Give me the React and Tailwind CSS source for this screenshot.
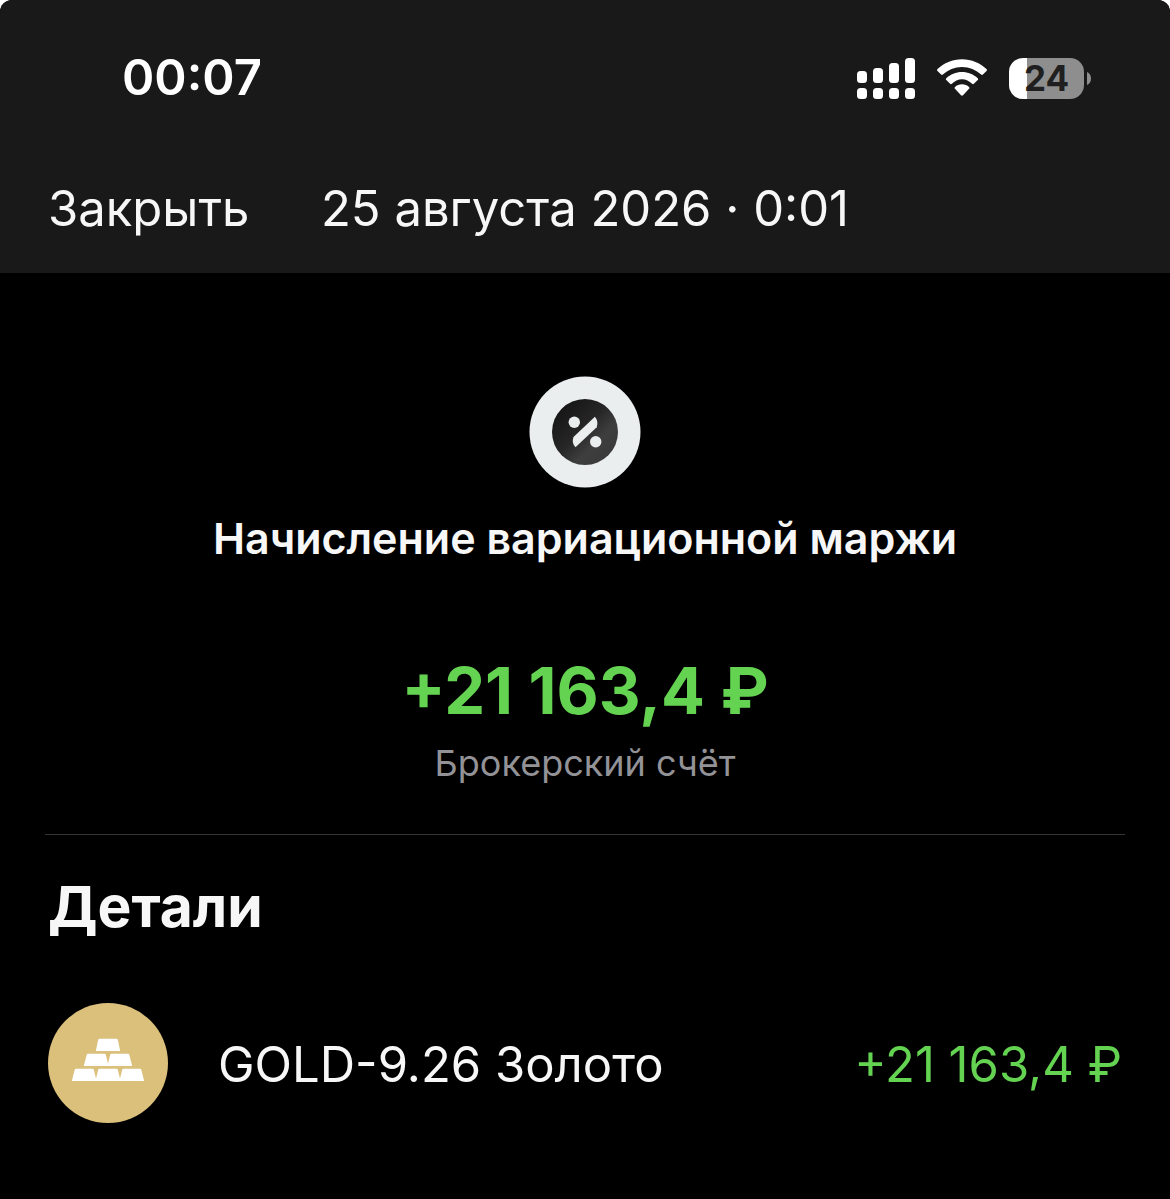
import React from "react";

const operation = {
  date: "25 августа 2026 · 0:01",
  title: "Начисление вариационной маржи",
  amount: "+21 163,4 ₽",
  account: "Брокерский счёт",
};

const details = [{ name: "GOLD-9.26 Золото", amount: "+21 163,4 ₽" }];

const SignalIcon = () => (
  <svg width="58" height="41" viewBox="0 0 58 41" fill="#fff" aria-hidden="true">
    <rect x="0" y="13" width="10" height="12" rx="3.5" />
    <rect x="16" y="10" width="10" height="15" rx="3.5" />
    <rect x="32" y="5" width="10" height="20" rx="3.5" />
    <rect x="48" y="0" width="10" height="25" rx="3.5" />
    <rect x="0" y="30" width="10" height="11" rx="3.5" />
    <rect x="16" y="30" width="10" height="11" rx="3.5" />
    <rect x="32" y="30" width="10" height="11" rx="3.5" />
    <rect x="48" y="30" width="10" height="11" rx="3.5" />
  </svg>
);

const WifiIcon = () => (
  <svg width="52" height="38" viewBox="0 0 52 38" fill="#fff" aria-hidden="true">
    <path d="M26 .2C16.500.2 7.800 4 1.500 10.100c-.6.6-.6 1.300 0 1.900l3.600 3.600c.5.5 1.200.5 1.800 0C11.900 10.800 18.600 7.900 26 7.900s14.100 2.900 19.100 7.700c.6.5 1.300.5 1.800 0l3.600-3.600c.6-.6.6-1.300 0-1.900C44.200 4 35.500.2 26 .2z" />
    <path d="M26 13c-6.100 0-11.600 2.400-15.700 6.200-.6.6-.6 1.300 0 1.900l3.800 3.700c.5.5 1.200.5 1.800 0C18.600 22.300 22.100 20.200 26 20.200s7.400 2.100 10.100 4.600c.6.5 1.300.5 1.800 0l3.800-3.700c.6-.6.6-1.300 0-1.900C37.600 15.400 32.100 13 26 13z" />
    <path d="M26 25.300c-2.800 0-5.200 1-7 2.600-.6.6-.6 1.300 0 1.900l6 6.500c.6.6 1.400.6 2 0l6-6.500c.6-.6.6-1.300 0-1.900C31.200 26.300 28.800 25.300 26 25.300z" />
  </svg>
);

const Battery = ({ level }) => (
  <div className="flex items-center gap-[3px]">
    <div className="flex h-[41px] w-[75px] items-center justify-center rounded-[14px] bg-linear-to-r from-white from-24% to-[#8e8e8e] to-24% text-[35px] leading-10 font-bold text-[#1f1f1f]">
      {level}
    </div>
    <svg width="4" height="13" viewBox="0 0 4 13" fill="#8e8e8e" aria-hidden="true">
      <path d="M0 0C2.500 1 4 3.500 4 6.500S2.500 12 0 13z" />
    </svg>
  </div>
);

const PercentIcon = () => (
  <svg width="112" height="112" viewBox="0 0 112 112" aria-hidden="true">
    <defs>
      <linearGradient id="disc" x1="0.1" y1="0.1" x2="0.9" y2="0.9">
        <stop offset="0" stopColor="#141414" />
        <stop offset="0.45" stopColor="#262626" />
        <stop offset="0.7" stopColor="#3e3e3e" />
        <stop offset="1" stopColor="#3a3a3a" />
      </linearGradient>
    </defs>
    <circle cx="56" cy="56" r="55.5" fill="#ebeeef" />
    <circle cx="56" cy="56" r="33" fill="url(#disc)" />
    <g fill="#ebeeef">
      <circle cx="45.3" cy="46.3" r="5.7" />
      <circle cx="66.7" cy="65.7" r="5.700" />
      <path d="M65.900 40.800C68.500 43.500 69 47.500 67.700 51.200L46.500 71.300C43.700 68.500 43 64.800 44.500 61z" />
    </g>
  </svg>
);

const GoldIcon = () => (
  <svg width="120" height="120" viewBox="0 0 120 120" aria-hidden="true">
    <circle cx="60" cy="60" r="60" fill="#dbc07c" />
    <g fill="#fff">
      <path d="M51.500 35.700h17q1 0 1.300 1L72.200 48H47.800L50.200 36.700q.3-1 1.300-1z" />
      <path d="M40 50.700h16.500q1 0 1.300 1L60 60.500 62.200 51.700q.3-1 1.300-1H80q1 0 1.300 1L84.200 63H35.800L38.700 51.700q.3-1 1.300-1z" />
      <path d="M28 65.700h16.500q1 0 1.300 1L48 75.500 50.200 66.700q.3-1 1.300-1h17q1 0 1.300 1L72 75.500 74.200 66.700q.3-1 1.300-1H92q1 0 1.300 1L96.200 78H23.800L26.700 66.700q.3-1 1.300-1z" />
    </g>
  </svg>
);

const App = () => {
  return (
    <div className="min-h-screen overflow-hidden rounded-t-xl bg-black font-['Inter',sans-serif] text-[#f7f7f8]">
      <header className="bg-[#191919] pt-12 pb-[34px]">
        <div className="flex h-[60px] items-center justify-between pr-[79px] pl-[122px] text-white">
          <time className="text-[49px] leading-[60px] font-semibold">00:07</time>
          <div className="flex items-center gap-[21px]">
            <SignalIcon />
            <WifiIcon />
            <Battery level={24} />
          </div>
        </div>
        <div className="mt-[71px] grid grid-cols-[1fr_auto_1fr] items-center px-12 text-[49px] leading-[60px]">
          <button type="button" className="justify-self-start">
            Закрыть
          </button>
          <h1>{operation.date}</h1>
        </div>
      </header>

      <main className="px-[45px]">
        <section className="flex flex-col items-center border-b border-[#343436] pt-[103px] pb-[51px] text-center">
          <PercentIcon />
          <h2 className="mt-[23px] text-[43px] leading-[54px] font-semibold">
            {operation.title}
          </h2>
          <p className="mt-[86px] text-[65px] leading-[80px] font-bold text-[#65d352]">
            {operation.amount}
          </p>
          <p className="mt-3 text-4xl text-[#929297]">{operation.account}</p>
        </section>

        <section className="px-[3px] pt-9">
          <h2 className="text-[57px] leading-[72px] font-bold">Детали</h2>
          <ul className="mt-[60px]">
            {details.map((item) => (
              <li key={item.name} className="flex items-center text-[49px] leading-[60px]">
                <GoldIcon />
                <span className="ml-[50px] flex-1 pt-1">{item.name}</span>
                <span className="pt-1 text-[#65d352]">{item.amount}</span>
              </li>
            ))}
          </ul>
        </section>
      </main>
    </div>
  );
};

export default App;
